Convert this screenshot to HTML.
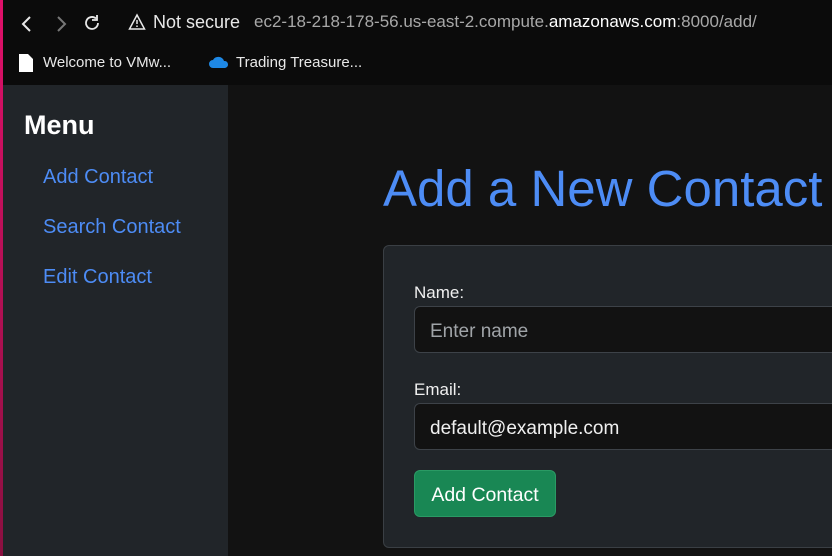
<!DOCTYPE html>
<html><head><meta charset="utf-8"><style>
*{margin:0;padding:0;box-sizing:border-box}
body{width:832px;height:556px;overflow:hidden;background:#121212;font-family:"Liberation Sans",sans-serif;position:relative}
.edge{position:absolute;left:0;top:0;width:3px;height:556px;background:linear-gradient(#e0106a,#8a1040)}
.bar{position:absolute;left:3px;top:0;width:829px;height:85px;background:#0b0b0b;color:#e8e8e8}
.t{position:absolute;white-space:nowrap}
.side{position:absolute;left:3px;top:85px;width:225px;height:471px;background:#212529}
.side a{position:absolute;left:40px;color:#4d8cf5;font-size:20px;text-decoration:none}
h1{position:absolute;left:383px;top:159px;font-size:51px;font-weight:normal;color:#4d8cf5;white-space:nowrap}
.card{position:absolute;left:383px;top:245px;width:470px;height:303px;background:#212529;border:1px solid #3a3f44;border-radius:6px}
.lab{position:absolute;left:414px;color:#f0f0f0;font-size:17px}
.inp{position:absolute;left:414px;width:430px;height:47px;background:#121212;border:1px solid #3d4248;border-radius:6px;font-size:19px;padding:14px 15px 0}
.btn{position:absolute;left:414px;top:470px;width:142px;height:47px;background:#198754;border:1px solid #2a9a64;border-radius:6px;color:#fff;font-size:19.5px;text-align:center;line-height:48px}
</style></head><body>
<div class="edge"></div>
<div class="bar">
<svg class="t" style="left:14px;top:14px" width="20" height="20" viewBox="0 0 20 20"><path d="M13 3 6 10l7 7" stroke="#e8e8e8" stroke-width="2" fill="none"/></svg>
<svg class="t" style="left:48px;top:14px" width="20" height="20" viewBox="0 0 20 20"><path d="M7 3l7 7-7 7" stroke="#777" stroke-width="2" fill="none"/></svg>
<svg class="t" style="left:79px;top:13px" width="20" height="20" viewBox="0 0 20 20"><path d="M16 10a6 6 0 1 1-2-4.5" stroke="#e8e8e8" stroke-width="1.8" fill="none"/><path d="M15 2v5h-5" stroke="#e8e8e8" stroke-width="1.8" fill="none"/></svg>
<svg class="t" style="left:125px;top:13px" width="18" height="18" viewBox="0 0 18 18"><path d="M9 2 1.5 16h15z" stroke="#e8e8e8" stroke-width="1.5" fill="none"/><path d="M9 7v4M9 12.5v1.5" stroke="#e8e8e8" stroke-width="1.5"/></svg>
<div class="t" style="left:150px;top:12px;font-size:18px">Not secure</div>
<div class="t" style="left:251px;top:12px;font-size:17px;color:#a8a8a8">ec2-18-218-178-56.us-east-2.compute.<span style="color:#fff">amazonaws.com</span>:8000/add/</div>
<svg class="t" style="left:16px;top:54px" width="14" height="18" viewBox="0 0 14 18"><path d="M0 0h9l5 5v13H0z" fill="#fff"/></svg>
<div class="t" style="left:40px;top:54px;font-size:15px">Welcome to VMw...</div>
<svg class="t" style="left:205px;top:55px" width="22" height="14" viewBox="0 0 22 14"><path d="M5 13a4 4 0 0 1 0-8 6 6 0 0 1 11 1 3.5 3.5 0 0 1 1 7z" fill="#1e88e5"/></svg>
<div class="t" style="left:233px;top:54px;font-size:15px">Trading Treasure...</div>
</div>
<div class="side">
<div class="t" style="left:21px;top:25px;color:#fff;font-size:27px;font-weight:bold">Menu</div>
<a style="top:81px">Add Contact</a>
<a style="top:131px">Search Contact</a>
<a style="top:181px">Edit Contact</a>
</div>
<h1>Add a New Contact</h1>
<div class="card"></div>
<div class="lab" style="top:283px">Name:</div>
<div class="inp" style="top:306px;color:#a0a4a8">Enter name</div>
<div class="lab" style="top:380px">Email:</div>
<div class="inp" style="top:403px;color:#f0f0f0">default@example.com</div>
<div class="btn">Add Contact</div>
</body></html>
